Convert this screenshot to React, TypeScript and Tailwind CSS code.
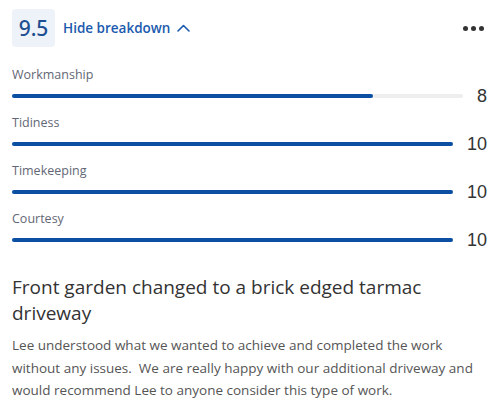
const ratings = [
  { label: "Workmanship", score: 8 },
  { label: "Tidiness", score: 10 },
  { label: "Timekeeping", score: 10 },
  { label: "Courtesy", score: 10 },
];

export default function App() {
  return (
    <div className="w-[500px] h-[417px] bg-white pl-3 pr-[13px] font-['Open_Sans',sans-serif]">
      <div className="flex items-center pt-[9px]">
        <div className="w-[43px] h-[38px] rounded bg-[#eef3fa] flex items-center justify-center text-[21px] font-medium font-['Noto_Sans',sans-serif] text-[#1d4f91] leading-none">
          9.5
        </div>
        <button className="ml-2 flex items-center gap-[7px] text-[13.5px] font-semibold text-[#1c5aae]">
          Hide breakdown
          <svg width="13" height="8" viewBox="0 0 13 8" fill="none">
            <path d="M1 7L6.5 1.5L12 7" stroke="currentColor" strokeWidth="1.6" strokeLinecap="round" strokeLinejoin="round" />
          </svg>
        </button>
        <div className="ml-auto mr-[3px] flex items-center gap-[3px]">
          <span className="w-[5px] h-[5px] rounded-full bg-[#333]" />
          <span className="w-[5px] h-[5px] rounded-full bg-[#333]" />
          <span className="w-[5px] h-[5px] rounded-full bg-[#333]" />
        </div>
      </div>

      <div className="mt-[19px]">
        {ratings.map((r) => (
          <div key={r.label} className="mb-[6px]">
            <div className="h-[18px] leading-[18px] text-[12.5px] text-[#636775]">{r.label}</div>
            <div className="flex items-center h-[24px]">
              <div className="flex-1 h-1 rounded-full bg-[#eeeeee]">
                <div className="h-1 rounded-full bg-[#0b4fa3]" style={{ width: `${r.score * 10}%` }} />
              </div>
              <div className="ml-[14px] text-[18px] text-[#333] font-['Liberation_Sans',sans-serif] leading-none">{r.score}</div>
            </div>
          </div>
        ))}
      </div>

      <h2 className="mt-[22px] text-[19px] leading-[26px] text-[#333]">
        Front garden changed to a brick edged tarmac driveway
      </h2>
      <p className="mt-[8px] text-[13.5px] leading-[22.5px] text-[#555]">
        Lee understood what we wanted to achieve and completed the work without any issues.&nbsp; We are really happy with our additional driveway and would recommend Lee to anyone consider this type of work.
      </p>
    </div>
  );
}
